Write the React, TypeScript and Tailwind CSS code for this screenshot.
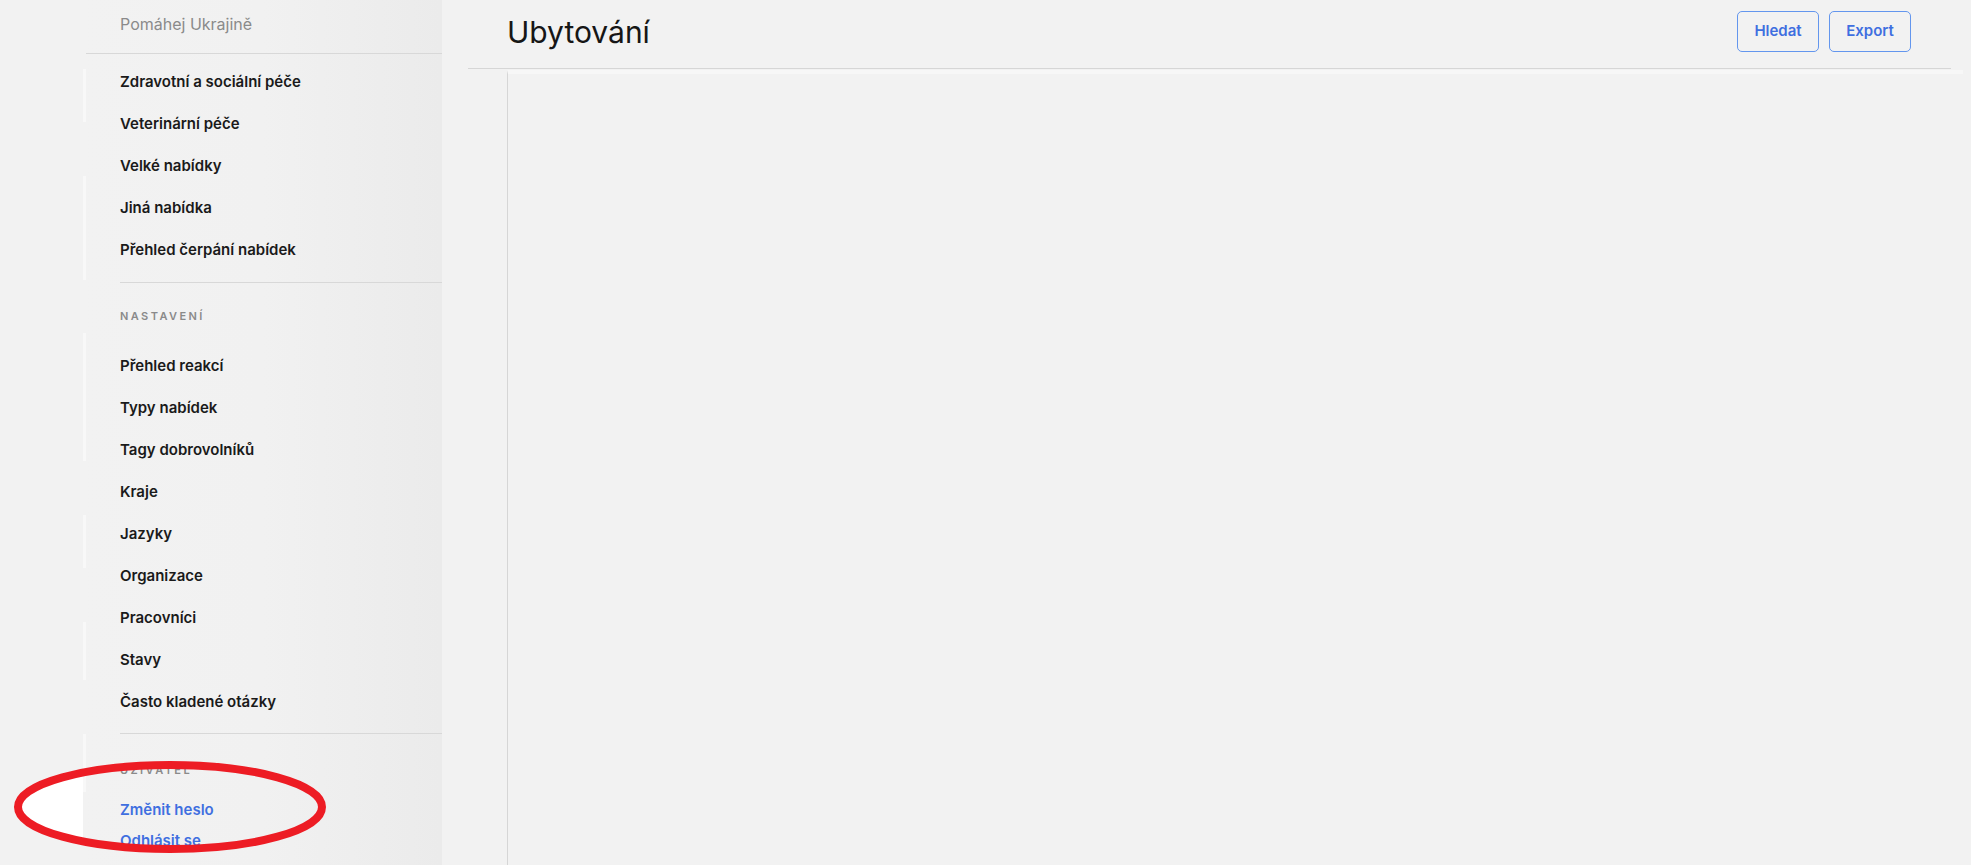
import React from "react";

const group1 = [
  "Zdravotní a sociální péče",
  "Veterinární péče",
  "Velké nabídky",
  "Jiná nabídka",
  "Přehled čerpání nabídek",
];

const group2 = [
  "Přehled reakcí",
  "Typy nabídek",
  "Tagy dobrovolníků",
  "Kraje",
  "Jazyky",
  "Organizace",
  "Pracovníci",
  "Stavy",
  "Často kladené otázky",
];

const strips: Array<[number, boolean]> = [
  [69, false],
  [53, true],
  [54, false],
  [104, true],
  [53, false],
  [128, true],
  [54, false],
  [53, true],
  [54, false],
  [58, true],
  [54, false],
  [58, true],
];

export default function App() {
  return (
    <div className="relative w-full h-[865px] overflow-hidden bg-[#f2f2f2] flex font-['Inter',_'Noto_Sans',_sans-serif] text-[#1a1a1a]">
      {/* left blank */}
      <div className="w-[83px] shrink-0" />

      {/* sidebar */}
      <aside className="w-[359px] shrink-0 flex bg-linear-to-r from-[#f2f2f2] via-[#f1f1f1] to-[#ebebeb]">
        <div className="w-[3px] shrink-0 flex flex-col">
          {strips.map(([h, on], i) => (
            <div
              key={i}
              className={on ? "bg-[#f8f8f8]" : ""}
              style={{ height: h }}
            />
          ))}
        </div>
        <nav className="flex-1 flex flex-col">
          <div className="h-[54px] pt-[12px] pl-[34px] border-b border-[#d8d8d8] text-[16px] leading-[24px] text-[#8a8a8a]">
            Pomáhej Ukrajině
          </div>
          <ul className="pt-[7px] pl-[34px]">
            {group1.map((t) => (
              <li key={t} className="h-[42px] flex items-center text-[15px] font-semibold">
                {t}
              </li>
            ))}
          </ul>
          <div className="ml-[34px] mt-[11px] border-t border-[#d8d8d8]" />
          <div className="pl-[34px] pt-[25px] text-[11px] leading-[16px] font-semibold tracking-[0.22em] text-[#8a8a8a]">
            NASTAVENÍ
          </div>
          <ul className="pt-[21px] pl-[34px]">
            {group2.map((t) => (
              <li key={t} className="h-[42px] flex items-center text-[15px] font-semibold">
                {t}
              </li>
            ))}
          </ul>
          <div className="ml-[34px] mt-[10px] border-t border-[#d8d8d8]" />
          <div className="pl-[34px] pt-[28px] text-[11px] leading-[16px] font-semibold tracking-[0.22em] text-[#8a8a8a]">
            UŽIVATEL
          </div>
          <ul className="pt-[17px] pl-[34px]">
            <li className="h-[31px] flex items-center text-[15px] font-semibold text-[#3f6fe0]">Změnit heslo</li>
            <li className="h-[31px] flex items-center text-[15px] font-semibold text-[#3f6fe0]">Odhlásit se</li>
          </ul>
        </nav>
      </aside>

      {/* main */}
      <main className="flex-1 flex flex-col min-w-0">
        <header className="ml-[26px] mr-[20px] h-[69px] shrink-0 border-b border-[#d6d6d6] flex items-center justify-between pl-[39px] pr-[40px] pb-[5px]">
          <h1 className="text-[30px] leading-[36px] font-normal text-[#161616]">Ubytování</h1>
          <div className="flex gap-[10px]">
            <button className="w-[82px] h-[41px] rounded-[5px] border border-[#6396ee] text-[#3f6fe0] text-[15px] font-semibold">
              Hledat
            </button>
            <button className="w-[82px] h-[41px] rounded-[5px] border border-[#6396ee] text-[#3f6fe0] text-[15px] font-semibold">
              Export
            </button>
          </div>
        </header>
        <section className="flex-1 ml-[65px] mr-[8px] mt-[1px] border-l border-[#d6d6d6] border-t-[4px] border-t-[#f7f7f7]" />
      </main>

      {/* annotation overlay */}
      <svg
        className="absolute left-0 top-0 pointer-events-none"
        width="400"
        height="865"
        viewBox="0 0 400 865"
      >
        <defs>
          <clipPath id="leftClip">
            <rect x="0" y="0" width="83" height="865" />
          </clipPath>
        </defs>
        <ellipse cx="170" cy="807" rx="152" ry="42" fill="#ffffff" clipPath="url(#leftClip)" />
        <ellipse cx="170" cy="807" rx="152" ry="42" fill="none" stroke="#ed1c24" strokeWidth="8" />
      </svg>
    </div>
  );
}
